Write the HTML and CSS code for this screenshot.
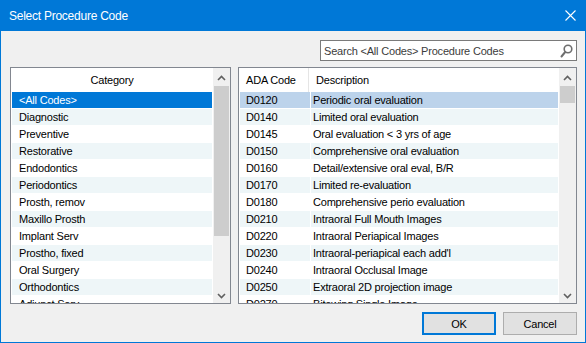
FILE: index.html
```html
<!DOCTYPE html>
<html>
<head>
<meta charset="utf-8">
<link rel="stylesheet" href="styles.css">
</head>
<body>
<div class="window">
  <div class="titlebar">
    <span class="title">Select Procedure Code</span>
    <svg class="close" width="11" height="11" viewBox="0 0 11 11"><path d="M0.5 0.5L10.5 10.5M10.5 0.5L0.5 10.5" stroke="#fff" stroke-width="1.1" fill="none"/></svg>
  </div>
  <div class="content">
    <div class="search-row">
      <div class="search">
        <span class="search-text">Search &lt;All Codes&gt; Procedure Codes</span>
        <svg class="mag" width="13" height="14" viewBox="0 0 13 14"><circle cx="8" cy="5" r="3.8" stroke="#6e6e6e" stroke-width="1.6" fill="none"/><path d="M5.2 8L1.5 12.5" stroke="#6e6e6e" stroke-width="2" stroke-linecap="round"/></svg>
      </div>
    </div>
    <div class="lists">
      <div class="list list-cat">
        <div class="list-body">
          <div class="header header-center">Category</div>
          <div class="row sel">&lt;All Codes&gt;</div>
          <div class="row alt">Diagnostic</div>
          <div class="row">Preventive</div>
          <div class="row alt">Restorative</div>
          <div class="row">Endodontics</div>
          <div class="row alt">Periodontics</div>
          <div class="row">Prosth, remov</div>
          <div class="row alt">Maxillo Prosth</div>
          <div class="row">Implant Serv</div>
          <div class="row alt">Prostho, fixed</div>
          <div class="row">Oral Surgery</div>
          <div class="row alt">Orthodontics</div>
          <div class="row">Adjunct Serv</div>
        </div>
        <div class="scrollbar">
          <div class="sb-btn"><svg width="9" height="6" viewBox="0 0 9 6"><path d="M1 5L4.5 1.5L8 5" stroke="#606060" stroke-width="1.6" fill="none"/></svg></div>
          <div class="track"><div class="thumb thumb-cat"></div></div>
          <div class="sb-btn"><svg width="9" height="6" viewBox="0 0 9 6"><path d="M1 1L4.5 4.5L8 1" stroke="#606060" stroke-width="1.6" fill="none"/></svg></div>
        </div>
      </div>
      <div class="list list-codes">
        <div class="list-body">
          <div class="header grid-header">
            <div class="hcode">ADA Code</div>
            <div class="hdesc">Description</div>
          </div>
          <div class="row crow csel"><div class="code">D0120</div><div class="desc">Periodic oral evaluation</div></div>
          <div class="row crow alt"><div class="code">D0140</div><div class="desc">Limited oral evaluation</div></div>
          <div class="row crow"><div class="code">D0145</div><div class="desc">Oral evaluation &lt; 3 yrs of age</div></div>
          <div class="row crow alt"><div class="code">D0150</div><div class="desc">Comprehensive oral evaluation</div></div>
          <div class="row crow"><div class="code">D0160</div><div class="desc">Detail/extensive oral eval, B/R</div></div>
          <div class="row crow alt"><div class="code">D0170</div><div class="desc">Limited re-evaluation</div></div>
          <div class="row crow"><div class="code">D0180</div><div class="desc">Comprehensive perio evaluation</div></div>
          <div class="row crow alt"><div class="code">D0210</div><div class="desc">Intraoral Full Mouth Images</div></div>
          <div class="row crow"><div class="code">D0220</div><div class="desc">Intraoral Periapical Images</div></div>
          <div class="row crow alt"><div class="code">D0230</div><div class="desc">Intraoral-periapical each add'l</div></div>
          <div class="row crow"><div class="code">D0240</div><div class="desc">Intraoral Occlusal Image</div></div>
          <div class="row crow alt"><div class="code">D0250</div><div class="desc">Extraoral 2D projection image</div></div>
          <div class="row crow"><div class="code">D0270</div><div class="desc">Bitewing Single Image</div></div>
        </div>
        <div class="scrollbar">
          <div class="sb-btn"><svg width="9" height="6" viewBox="0 0 9 6"><path d="M1 5L4.5 1.5L8 5" stroke="#606060" stroke-width="1.6" fill="none"/></svg></div>
          <div class="track"><div class="thumb thumb-codes"></div></div>
          <div class="sb-btn"><svg width="9" height="6" viewBox="0 0 9 6"><path d="M1 1L4.5 4.5L8 1" stroke="#606060" stroke-width="1.6" fill="none"/></svg></div>
        </div>
      </div>
    </div>
    <div class="buttons">
      <div class="btn btn-default">OK</div>
      <div class="btn">Cancel</div>
    </div>
  </div>
</div>
</body>
</html>
```
FILE: styles.css
```css
* { box-sizing: border-box; }
html, body { margin: 0; padding: 0; background: #f0f0f0; }
body { width: 586px; height: 343px; overflow: hidden; font-family: "Liberation Sans", Arial, sans-serif; font-size: 11px; letter-spacing: -0.2px; color: #000; }
.window { width: 586px; height: 343px; border: 1px solid #0078d7; border-top: none; background: #f0f0f0; display: flex; flex-direction: column; }
.titlebar { height: 31px; background: #0078d7; margin: 0 -1px; display: flex; align-items: center; justify-content: space-between; padding: 0 10px 0 9px; color: #fff; }
.title { font-size: 12px; letter-spacing: -0.25px; }
.close { display: block; }
.content { flex: 1; display: flex; flex-direction: column; padding: 9px 8px 0 9px; }
.search-row { display: flex; justify-content: flex-end; }
.search { width: 257px; height: 21px; background: #fff; border: 1px solid #7a7a7a; display: flex; align-items: center; justify-content: space-between; padding: 0 3px 0 3px; }
.search-text { color: #3c3c3c; }
.mag { display: block; }
.lists { display: flex; gap: 7px; margin-top: 6px; height: 237px; }
.list { border: 1px solid #828790; background: #fff; display: flex; overflow: hidden; }
.list-cat { width: 221px; }
.list-codes { flex: 1; }
.list-body { flex: 1; overflow: hidden; padding: 0 1px; }
.header { height: 24px; display: flex; align-items: center; background: #fff; }
.header-center { justify-content: center; }
.row { height: 17px; line-height: 16px; border-bottom: 1px solid #fff; padding-left: 7px; white-space: nowrap; }
.row.alt { background: #eef6f8; }
.row.sel { background: #0078d7; color: #fff; }
.crow { display: flex; padding-left: 0; }
.crow.csel { background: #bcd3eb; }
.code { width: 71px; padding-left: 6px; border-right: 1px solid #fff; }
.desc { padding-left: 2px; }
.grid-header { align-items: stretch; }
.hcode { width: 69px; padding-left: 6px; border-right: 1px solid #e5e5e5; display: flex; align-items: center; }
.hdesc { padding-left: 7px; display: flex; align-items: center; }
.scrollbar { width: 17px; background: #f0f0f0; display: flex; flex-direction: column; }
.sb-btn { height: 17px; display: flex; align-items: center; justify-content: center; padding-top: 3px; }
.track { flex: 1; padding: 1px 1px 0 1px; }
.thumb { background: #cdcdcd; }
.thumb-cat { height: 150px; }
.thumb-codes { height: 17px; }
.buttons { display: flex; justify-content: flex-end; gap: 7px; margin-top: 8px; }
.btn { width: 74px; height: 23px; background: #e1e1e1; border: 1px solid #adadad; display: flex; align-items: center; justify-content: center; }
.btn-default { border: 2px solid #0078d7; }
```
